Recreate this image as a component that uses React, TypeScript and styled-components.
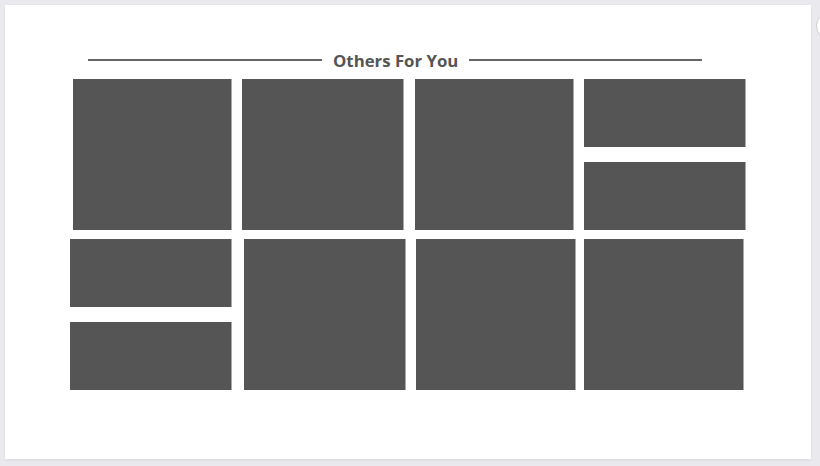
import React from "react";
import styled, { createGlobalStyle } from "styled-components";

const Global = createGlobalStyle`
  html, body { margin: 0; padding: 0; background: #e9e9ee; }
  body { font-family: "Open Sans", "Liberation Sans", sans-serif; overflow: hidden; }
`;

const Page = styled.div`
  position: relative;
  width: 820px;
  height: 466px;
  padding: 5px 0 0 5px;
  box-sizing: border-box;
`;

const Card = styled.div`
  width: 806px;
  height: 454px;
  background: #fff;
  box-shadow: 0 1px 3px rgba(0, 0, 0, 0.08);
  box-sizing: border-box;
  padding-top: 44px;
  display: flex;
  flex-direction: column;
`;

const Heading = styled.div`
  display: flex;
  align-items: center;
  gap: 11px;
  margin-left: 83px;
  height: 24px;
`;

const Rule = styled.span<{ $w: number }>`
  width: ${(p) => p.$w}px;
  height: 2px;
  background: #666;
  margin-top: -2px;
`;

const Title = styled.h2`
  margin: 0;
  font-size: 16.8px;
  font-weight: 700;
  color: #555;
  line-height: 24px;
  white-space: nowrap;
`;

const Grid = styled.div`
  margin-top: 6px;
  display: flex;
  flex-direction: column;
  gap: 9px;
`;

const Row = styled.div<{ $left: number }>`
  display: flex;
  height: 151px;
  margin-left: ${(p) => p.$left}px;
`;

const Tile = styled.div<{ $w: number; $gap: number }>`
  width: ${(p) => p.$w}px;
  margin-right: ${(p) => p.$gap}px;
  height: 100%;
  background: #555555;
  box-shadow: 1px 0 0 #a9a9a9;
  flex-shrink: 0;
`;

const Stack = styled.div<{ $w: number; $gap: number }>`
  width: ${(p) => p.$w}px;
  margin-right: ${(p) => p.$gap}px;
  display: flex;
  flex-direction: column;
  justify-content: space-between;
  flex-shrink: 0;
`;

const Half = styled.div`
  height: 68px;
  background: #555555;
  box-shadow: 1px 0 0 #a9a9a9;
`;

const EdgeButton = styled.div`
  position: absolute;
  left: 816px;
  top: 12px;
  width: 28px;
  height: 28px;
  border-radius: 50%;
  background: #fff;
  border: 1px solid #cfcfd4;
  box-sizing: border-box;
`;

export default function App() {
  return (
    <>
      <Global />
      <Page>
        <Card>
          <Heading>
            <Rule $w={234} />
            <Title>Others For You</Title>
            <Rule $w={233} />
          </Heading>
          <Grid>
            <Row $left={68}>
              <Tile $w={158} $gap={11} />
              <Tile $w={161} $gap={12} />
              <Tile $w={158} $gap={11} />
              <Stack $w={161} $gap={0}>
                <Half />
                <Half />
              </Stack>
            </Row>
            <Row $left={65}>
              <Stack $w={161} $gap={13}>
                <Half />
                <Half />
              </Stack>
              <Tile $w={161} $gap={11} />
              <Tile $w={159} $gap={9} />
              <Tile $w={159} $gap={0} />
            </Row>
          </Grid>
        </Card>
        <EdgeButton />
      </Page>
    </>
  );
}
